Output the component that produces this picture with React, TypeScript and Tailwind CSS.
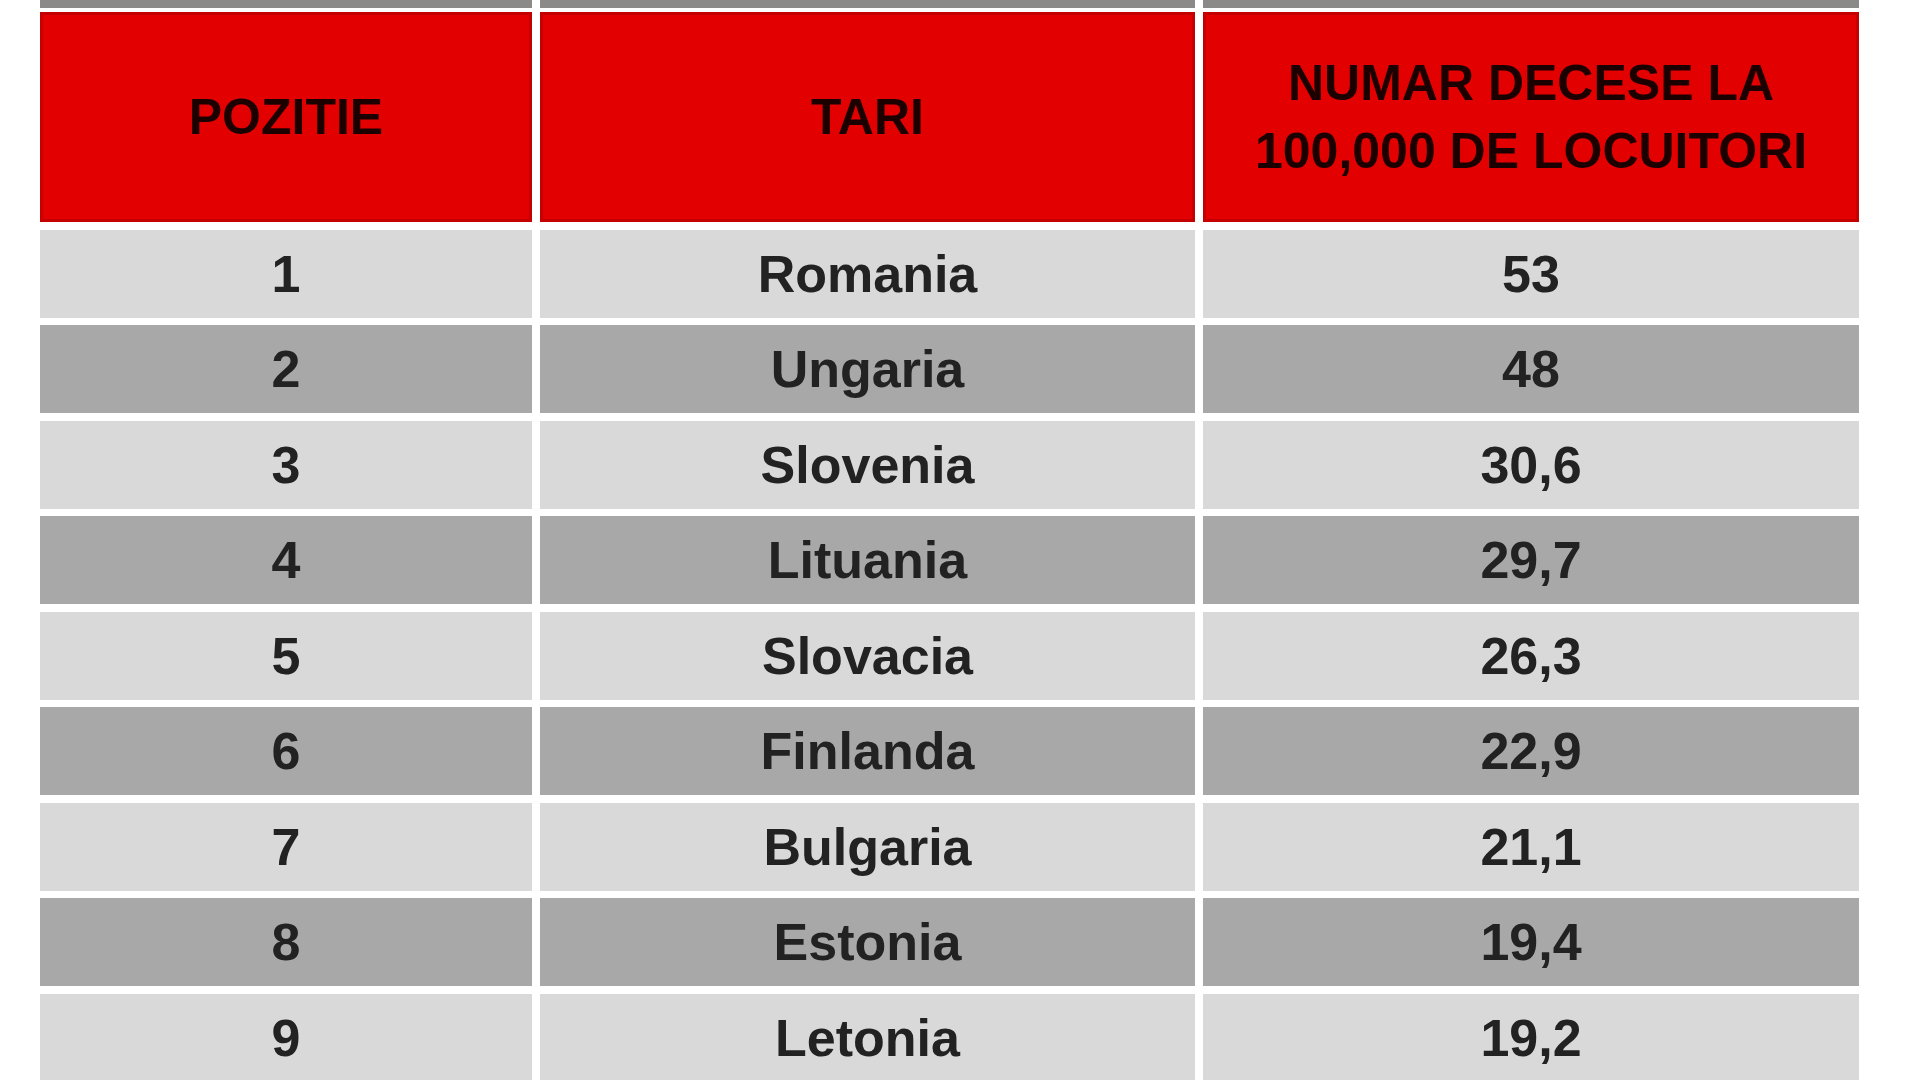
import React from "react";

const rows: [string, string, string][] = [
  ["1", "Romania", "53"],
  ["2", "Ungaria", "48"],
  ["3", "Slovenia", "30,6"],
  ["4", "Lituania", "29,7"],
  ["5", "Slovacia", "26,3"],
  ["6", "Finlanda", "22,9"],
  ["7", "Bulgaria", "21,1"],
  ["8", "Estonia", "19,4"],
  ["9", "Letonia", "19,2"],
];

export default function App() {
  return (
    <div
      className="w-[1920px] h-[1080px] overflow-hidden bg-white"
      style={{ fontFamily: '"Liberation Sans", Arial, sans-serif' }}
    >
      <div className="ml-[40px] w-[1819px] flex flex-col">
        <div className="grid grid-cols-[492px_655px_656px] gap-x-[8px] h-[8px]">
          <div className="bg-[#8c8a89]" />
          <div className="bg-[#8c8a89]" />
          <div className="bg-[#8c8a89]" />
        </div>
        <div className="mt-[4px] grid grid-cols-[492px_655px_656px] gap-x-[8px] gap-y-[7.5px]">
          <div className="h-[210px] bg-[#e20000] border-[3px] border-[#c40000] flex items-center justify-center text-[50px] font-bold text-[#1c0000] leading-[68px]">
            POZITIE
          </div>
          <div className="h-[210px] bg-[#e20000] border-[3px] border-[#c40000] flex items-center justify-center text-[50px] font-bold text-[#1c0000] leading-[68px]">
            TARI
          </div>
          <div className="h-[210px] bg-[#e20000] border-[3px] border-[#c40000] flex flex-col items-center justify-center text-[50px] font-bold text-[#1c0000] leading-[68px] text-center">
            <span>NUMAR DECESE LA</span>
            <span>100,000 DE LOCUITORI</span>
          </div>
          {rows.map(([pos, country, value], i) => {
            const bg = i % 2 === 0 ? "bg-[#d9d9d9]" : "bg-[#a8a8a8]";
            return (
              <React.Fragment key={pos}>
                <div className={`${bg} h-[88px] flex items-center justify-center text-[52px] font-bold text-[#222222]`}>
                  {pos}
                </div>
                <div className={`${bg} h-[88px] flex items-center justify-center text-[52px] font-bold text-[#222222]`}>
                  {country}
                </div>
                <div className={`${bg} h-[88px] flex items-center justify-center text-[52px] font-bold text-[#222222]`}>
                  {value}
                </div>
              </React.Fragment>
            );
          })}
        </div>
      </div>
    </div>
  );
}
